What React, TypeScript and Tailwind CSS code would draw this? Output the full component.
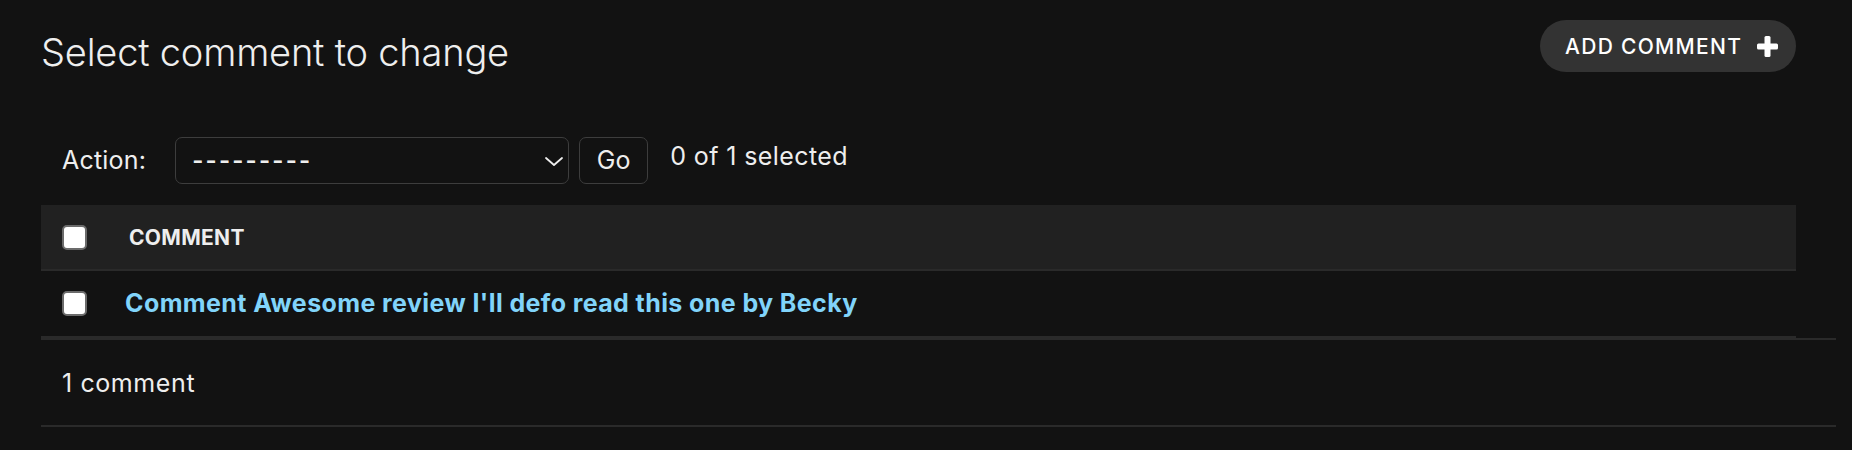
const font = { fontFamily: "Inter, 'Noto Sans', sans-serif" };

function Checkbox() {
  return (
    <span className="block w-[25px] h-[25px] rounded-[5px] bg-white border-2 border-[#6b6b6b]" />
  );
}

export default function App() {
  return (
    <div style={font} className="min-h-screen w-full bg-[#121212] pl-[41px] pr-[16px] text-[#eeeeee]">
      <div className="flex items-start justify-between pt-[20px] mr-[40px]">
        <h1 className="mt-[9px] text-[38px] leading-[46px] font-light tracking-[-0.2px] text-[#eeeeee]">
          Select comment to change
        </h1>
        <button className="flex items-center h-[52px] w-[256px] rounded-full bg-[#333333] pl-[25px] text-white">
          <span className="text-[21px] leading-none font-medium tracking-[1.3px]">ADD COMMENT</span>
          <svg className="ml-[15px]" width="21" height="21" viewBox="0 0 21 21">
            <rect x="7.5" y="0" width="6" height="21" rx="1.5" fill="white" />
            <rect x="0" y="7.5" width="21" height="6" rx="1.5" fill="white" />
          </svg>
        </button>
      </div>

      <div className="mr-[40px]">
        <div className="flex items-center h-[47px] mt-[62px] pl-[21px]">
          <span className="text-[25px] leading-none mr-[29px] tracking-[0.2px]">Action:</span>
          <div className="relative flex items-center w-[394px] h-[47px] rounded-[7px] border-[1.5px] border-[#3d3d3d] pl-[16px]">
            <span className="text-[24px] leading-none font-semibold tracking-[2.2px]">---------</span>
            <svg className="absolute right-[5px] top-[19px]" width="18" height="9" viewBox="0 0 18 9" fill="none">
              <polyline points="1,1 9,8 17,1" stroke="#eeeeee" strokeWidth="1.8" strokeLinecap="round" strokeLinejoin="round" />
            </svg>
          </div>
          <button className="ml-[10px] w-[69px] h-[47px] rounded-[7px] border-[1.5px] border-[#3d3d3d] text-[25px] leading-none">
            Go
          </button>
          <span className="ml-[22px] -mt-[8px] text-[25px] leading-none tracking-[0.4px]">0 of 1 selected</span>
        </div>

        <div className="mt-[21px]">
          <div className="flex items-center h-[66px] bg-[#212121] border-b-2 border-[#2a2a2a] pl-[21px]">
            <Checkbox />
            <span className="ml-[42px] text-[21px] leading-none font-bold tracking-[0.3px] text-[#eeeeee]">
              COMMENT
            </span>
          </div>
          <div className="flex items-center h-[67px] border-b-2 border-[#2a2a2a] pl-[21px]">
            <Checkbox />
            <a className="ml-[38px] text-[25px] leading-none font-bold tracking-[0.4px] text-[#81d4fa]">
              Comment Awesome review I'll defo read this one by Becky
            </a>
          </div>
        </div>
      </div>

      <div className="flex items-center h-[89px] border-t-2 border-b-2 border-[#2a2a2a] pl-[21px]">
        <span className="text-[25px] leading-none tracking-[0.6px] mt-[2px]">1 comment</span>
      </div>
    </div>
  );
}
